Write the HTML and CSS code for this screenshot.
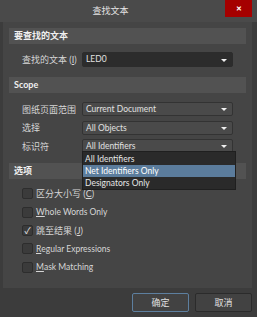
FILE: index.html
```html
<!DOCTYPE html>
<html lang="zh">
<head>
    <meta charset="UTF-8">
    <meta name="viewport" content="width=device-width, initial-scale=1.0">
    <title>查找文本</title>
    <link rel="stylesheet" href="styles.css">
</head>
<body>
    <div class="dialog">
        <div class="titlebar">
            <div class="title">查找文本</div>
            <div class="close">✕</div>
        </div>

        <div class="panel">
            <div class="section-head">要查找的文本</div>
            <div class="row first">
                <div class="label">查找的文本 (<u>I</u>)</div>
                <div class="combo edit">LED0<span class="arrow"></span></div>
            </div>

            <div class="section-head">Scope</div>
            <div class="rows">
                <div class="row">
                    <div class="label">图纸页面范围</div>
                    <div class="combo">Current Document<span class="arrow"></span></div>
                </div>
                <div class="row">
                    <div class="label">选择</div>
                    <div class="combo">All Objects<span class="arrow"></span></div>
                </div>
                <div class="row">
                    <div class="label">标识符</div>
                    <div class="combo open">All Identifiers<span class="arrow"></span>
                        <div class="popup">
                            <div class="opt">All Identifiers</div>
                            <div class="opt hl">Net Identifiers Only</div>
                            <div class="opt">Designators Only</div>
                        </div>
                    </div>
                </div>
            </div>

            <div class="section-head">选项</div>
            <div class="checks">
                <div class="check"><span class="box"></span>区分大小写 (<u>C</u>)</div>
                <div class="check"><span class="box"></span><u>W</u>hole Words Only</div>
                <div class="check"><span class="box on">✓</span>跳至结果 (<u>J</u>)</div>
                <div class="check"><span class="box"></span><u>R</u>egular Expressions</div>
                <div class="check"><span class="box"></span><u>M</u>ask Matching</div>
            </div>
        </div>

        <div class="buttons">
            <div class="btn ok">确定</div>
            <div class="btn">取消</div>
        </div>
    </div>
</body>
</html>
```

FILE: styles.css
```css
:root {
    --fundal: #3c3c3c;
    --panou: #454545;
    --antet: #525252;
    --text: #d6d6d6;
}

body {
    margin: 0;
    background: var(--fundal);
    color: var(--text);
    font-family: Lato, "Noto Sans CJK SC", sans-serif;
    font-size: 9px;
}

.dialog {
    width: 257px;
    height: 317px;
    overflow: hidden;
}

.titlebar {
    height: 22px;
    background: #4a4a4a;
    display: flex;
    align-items: flex-start;
}

.title {
    flex: 1;
    text-align: center;
    line-height: 22px;
    font-size: 9px;
    color: #e4e4e4;
    padding-right: 4px;
}

.close {
    width: 27px;
    height: 17px;
    margin-right: 5px;
    background: #a50000;
    color: #fff;
    font-size: 7px;
    font-weight: bold;
    text-align: center;
    line-height: 17px;
}

.panel {
    margin: 0 5px 0 3px;
    height: 266px;
    background: var(--panou);
    padding: 6px 6px 0 6px;
    box-sizing: border-box;
}

.section-head {
    height: 16px;
    line-height: 16px;
    background: var(--antet);
    color: #f0f0f0;
    font-weight: bold;
    padding-left: 5px;
}

.row {
    display: flex;
    align-items: center;
    height: 14px;
    padding-left: 13px;
}

.row.first {
    height: 15px;
    margin: 8px 0 10px;
}

.rows {
    display: flex;
    flex-direction: column;
    gap: 4.5px;
    margin: 9px 0 9.5px;
}

.label {
    width: 60px;
    white-space: nowrap;
}

.combo {
    position: relative;
    width: 151px;
    height: 100%;
    box-sizing: border-box;
    background: #4a4a4a;
    border: 1px solid #333;
    border-radius: 2px;
    padding-left: 3px;
    line-height: 12px;
    font-size: 8.5px;
    color: #e0e0e0;
}

.combo.edit {
    background: #2c2c2c;
    border-color: #2c2c2c;
    line-height: 13px;
}

.arrow {
    position: absolute;
    right: 5px;
    top: 50%;
    margin-top: -1px;
    border-left: 3px solid transparent;
    border-right: 3px solid transparent;
    border-top: 3px solid #f0f0f0;
}

.popup {
    position: absolute;
    left: -1px;
    top: 11px;
    width: 152px;
    background: #2a2a2a;
    border: 1px solid #1f1f1f;
    z-index: 2;
    padding: 1px 0 0;
}

.opt {
    height: 12px;
    line-height: 12px;
    padding-left: 2px;
    color: #e6e6e6;
}

.opt.hl {
    background: #5b7c9c;
    color: #fff;
}

.checks {
    padding: 6px 0 0 13px;
}

.check {
    display: flex;
    align-items: center;
    height: 18.4px;
    font-size: 8.5px;
}

.box {
    width: 11px;
    height: 11px;
    box-sizing: border-box;
    border: 1px solid #2d2d2d;
    background: #3b3b3b;
    border-radius: 2px;
    margin-right: 3px;
    font-size: 9px;
    line-height: 9px;
    text-align: center;
    color: #e8e8e8;
}

.check:nth-child(1),
.check:nth-child(3) {
    font-size: 9px;
}

.buttons {
    display: flex;
    justify-content: flex-end;
    gap: 6px;
    padding: 5px 5px 0 0;
}

.btn {
    width: 57px;
    height: 19px;
    box-sizing: border-box;
    border: 1px solid #2b2b2b;
    border-radius: 2px;
    background: #424242;
    text-align: center;
    line-height: 17px;
    color: #e0e0e0;
}

.btn.ok {
    border-color: #5d7f9f;
}
```
